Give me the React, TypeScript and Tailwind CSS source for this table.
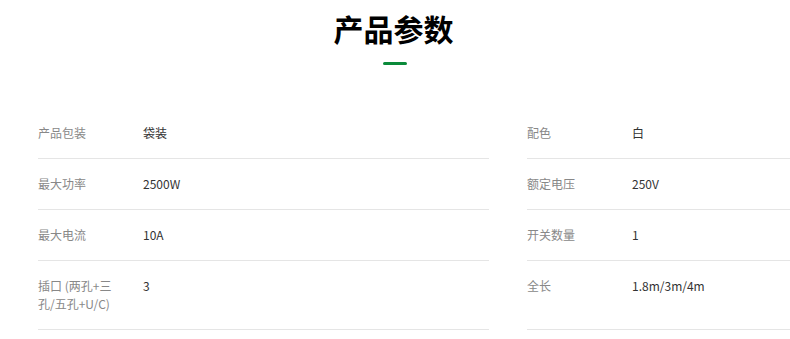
const rows: [string, string, string, string][] = [
  ['产品包装', '袋装', '配色', '白'],
  ['最大功率', '2500W', '额定电压', '250V'],
  ['最大电流', '10A', '开关数量', '1'],
  ['插口 (两孔+三孔/五孔+U/C)', '3', '全长', '1.8m/3m/4m'],
];

const Cell = ({ label, value }: { label: string; value: string }) => (
  <div className="flex border-b border-[#e5e5e5] py-4 text-[12px] leading-[18px]">
    <div className="w-[105px] shrink-0 pr-[25px] text-[#888]">{label}</div>
    <div className="text-[#333]">{value}</div>
  </div>
);

export default function App() {
  return (
    <div
      className="w-[790px] h-[339px] overflow-hidden bg-white"
      style={{ fontFamily: '"Noto Sans CJK SC", "Noto Sans", sans-serif' }}
    >
      <div className="flex flex-col items-center pt-[8px]">
        <h2 className="text-[30px] leading-[40px] font-bold text-black -ml-[3px]">产品参数</h2>
        <div className="mt-[14px] h-[3px] w-[24px] rounded-full bg-[#0a8a3a]" />
      </div>
      <div className="mt-[43px] ml-[38px] grid grid-cols-[451px_451px] gap-x-[38px] w-[940px]">
        {rows.map((r, i) => (
          <div key={i} className="contents">
            <Cell label={r[0]} value={r[1]} />
            <Cell label={r[2]} value={r[3]} />
          </div>
        ))}
      </div>
    </div>
  );
}
